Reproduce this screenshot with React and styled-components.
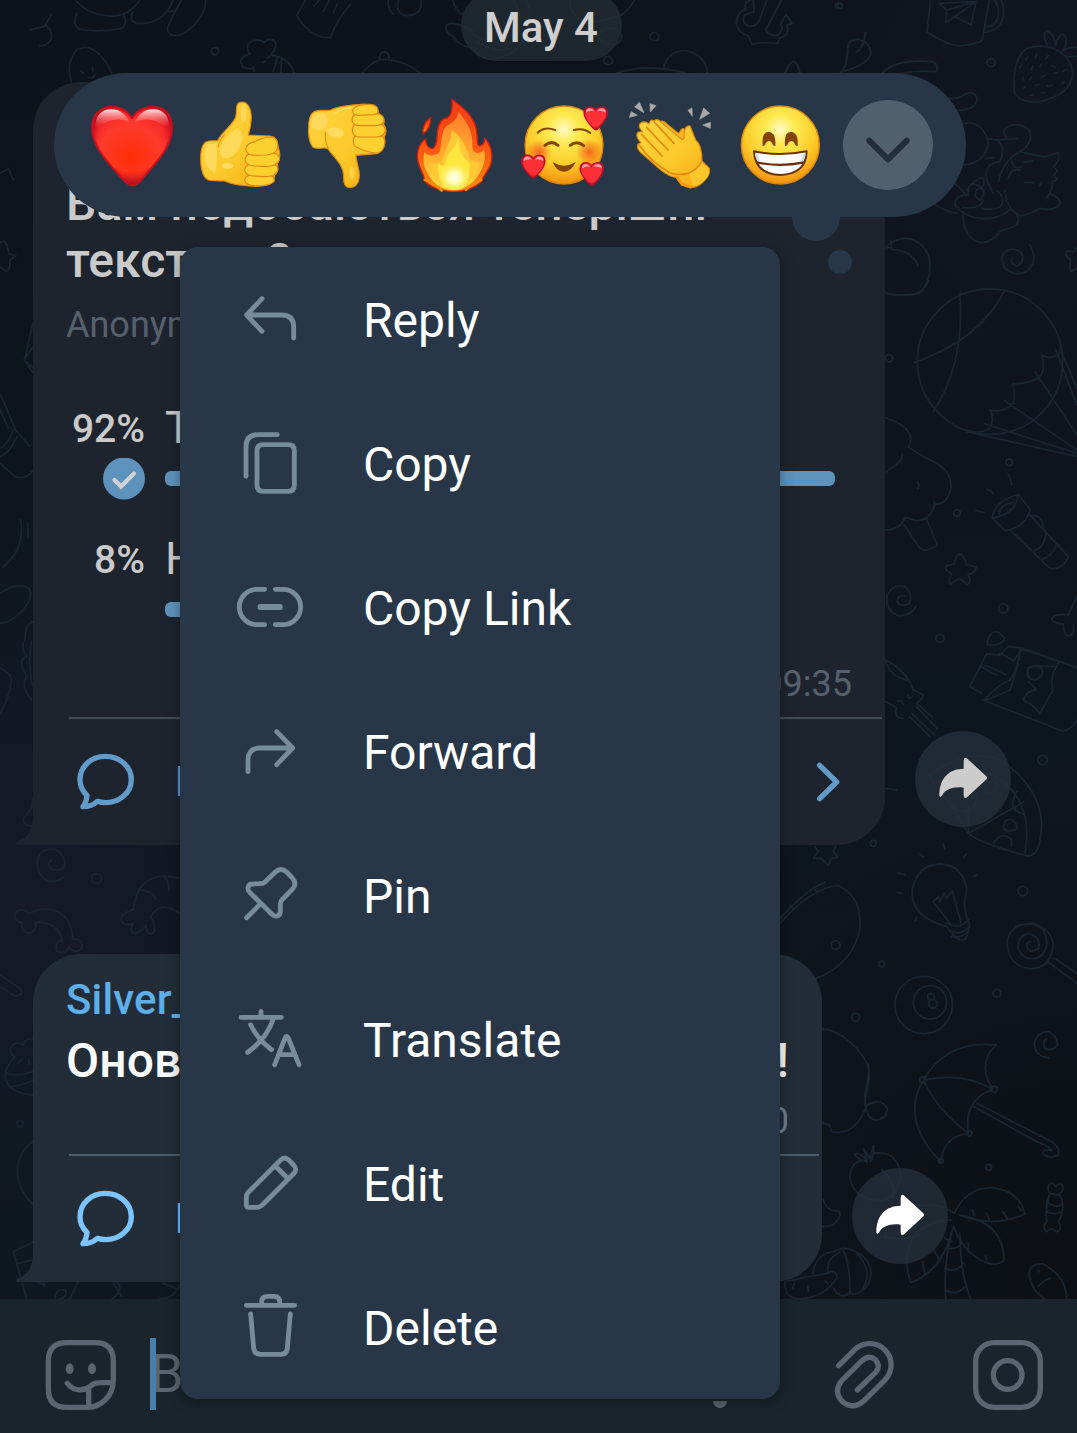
import React from "react";
import styled, { createGlobalStyle } from "styled-components";

const GlobalStyle = createGlobalStyle`
  * { box-sizing: border-box; }
  body { margin: 0; background: #0d131b; font-family: Roboto, "Noto Sans", sans-serif; }
  svg { display: block; flex: none; }
`;

const Screen = styled.div`
  position: relative;
  width: 1077px;
  height: 1433px;
  overflow: hidden;
  display: flex;
  flex-direction: column;
  background:
    radial-gradient(circle at 0% 62%, #141b27 0, rgba(20, 27, 39, 0) 420px),
    radial-gradient(circle at 100% 8%, #101520 0, rgba(16, 21, 32, 0) 620px),
    radial-gradient(circle at 100% 88%, #0c1015 0, rgba(12, 16, 21, 0) 520px),
    linear-gradient(180deg, #0c131a 0%, #0d151e 45%, #0f1820 100%);
`;

const Wallpaper = styled.svg`
  position: absolute;
  inset: 0;
  fill: none;
  stroke: #1a252f;
  stroke-width: 5.5;
  stroke-linecap: round;
  stroke-linejoin: round;
`;

const Chat = styled.main`
  position: relative;
  height: 1299px;
  display: flex;
  flex-direction: column;
  align-items: flex-start;
`;

const DatePill = styled.div`
  align-self: center;
  width: 161px;
  height: 71px;
  margin: -10px 0 21px 5px;
  padding-top: 4px;
  border-radius: 36px;
  display: flex;
  align-items: center;
  justify-content: center;
  flex: none;
  background: rgba(36, 45, 54, 0.75);
  color: #cfcfcf;
  font-size: 42px;
  font-weight: 500;
`;

const MessageRow = styled.div`
  display: flex;
  align-items: flex-end;
  gap: 30px;
  margin: 0 0 109px 33px;
  flex: none;
`;

const Bubble = styled.article`
  position: relative;
  width: ${(p) => p.$width}px;
  height: ${(p) => p.$height}px;
  padding-top: ${(p) => p.$top}px;
  border-radius: 48px 48px 48px 0;
  background: ${(p) => p.$bg};
  color: ${(p) => p.$fg};
  display: flex;
  flex-direction: column;
`;

const Tail = styled.svg`
  position: absolute;
  left: -17px;
  bottom: 0;
  fill: ${(p) => p.$bg};
`;

const Title = styled.h2`
  margin: ${(p) => p.$mt || 0}px 33px 0;
  font-size: 48px;
  font-weight: 500;
  line-height: 56.5px;
  letter-spacing: 0.08px;
  white-space: nowrap;
  text-align-last: ${(p) => (p.$spread ? "justify" : "left")};
`;

const Author = styled.div`
  margin-left: 33px;
  font-size: 42px;
  font-weight: 500;
  line-height: 49px;
  letter-spacing: 0.15px;
  color: #5eaee9;
`;

const PollKind = styled.div`
  margin: 15px 33px 23px;
  font-size: 36px;
  line-height: 42px;
  color: #57616c;
`;

const Option = styled.div`
  display: grid;
  grid-template-columns: 78px 1fr;
  grid-template-rows: 53px 42px;
  gap: 4px 21px;
  margin: 32px 49px 0 33px;
`;

const Percent = styled.span`
  align-self: end;
  justify-self: end;
  margin-right: -1px;
  font-size: 39px;
  font-weight: 500;
  line-height: 49px;
`;

const Answer = styled.span`
  font-size: 45px;
  line-height: 53px;
`;

const CheckSlot = styled.span`
  justify-self: end;
  margin-right: -1px;
`;

const Bar = styled.span`
  align-self: start;
  width: ${(p) => p.$value}px;
  height: 15px;
  margin-top: 13px;
  border-radius: 6px;
  background: #5d92bd;
`;

const Time = styled.time`
  align-self: flex-end;
  margin: ${(p) => p.$mt}px 33px 12px;
  font-size: 36px;
  line-height: 42px;
  color: ${(p) => p.$color};
`;

const CommentBar = styled.footer`
  display: flex;
  align-items: center;
  height: 128px;
  margin: 0 3px 0 36px;
  padding-right: 36px;
  border-top: 2px solid ${(p) => p.$line};
  color: ${(p) => p.$color};
  font-size: 42px;
  font-weight: 500;
`;

const CommentLabel = styled.span`
  flex: 1;
  padding-left: 34px;
  line-height: 49px;
  margin-top: -2px;
`;

const ShareButton = styled.button`
  width: 96px;
  height: 96px;
  margin: 0 0 18px;
  padding: 0;
  border: 0;
  border-radius: 50%;
  background: rgba(38, 48, 57, 0.8);
  color: ${(p) => p.$color};
`;

const Composer = styled.footer`
  position: relative;
  display: flex;
  align-items: center;
  height: 134px;
  padding: 18px 33px 0 45px;
  background: #1a242d;
  color: #5b6570;
  gap: 72px;
`;

const Field = styled.div`
  position: relative;
  flex: 1;
  margin-left: -39px;
  height: 72px;
  font-size: 54px;
  line-height: 70px;
`;

const Caret = styled.span`
  position: absolute;
  left: 0;
  top: -1px;
  width: 6px;
  height: 72px;
  background: #457fab;
`;

const ReactionBar = styled.div`
  position: absolute;
  left: 54px;
  top: 73px;
  width: 912px;
  height: 144px;
  padding: 0 33px 0 24px;
  border-radius: 72px;
  display: flex;
  align-items: center;
  background: #283747;
`;

const Dot = styled.span`
  position: absolute;
  left: ${(p) => p.$x}px;
  top: ${(p) => p.$y}px;
  width: ${(p) => p.$size}px;
  height: ${(p) => p.$size}px;
  border-radius: 50%;
  background: #283747;
`;

const Expand = styled.button`
  width: 90px;
  height: 90px;
  margin: 0 0 0 9px;
  padding: 0;
  border: 0;
  border-radius: 50%;
  background: #51606e;
`;

const Menu = styled.nav`
  position: absolute;
  left: 180px;
  top: 247px;
  width: 600px;
  border-radius: 18px;
  background: #283747;
  box-shadow: 0 3px 14px rgba(0, 0, 0, 0.35);
  color: #fff;
`;

const MenuItem = styled.div`
  display: flex;
  align-items: center;
  gap: 57px;
  height: 144px;
  padding: 0 54px;
  font-size: 48px;
`;

const MenuLabel = styled.span`
  padding-top: 2px;
`;

const MenuIcon = styled.svg`
  fill: none;
  stroke: #778b9a;
  stroke-width: 14.5;
  stroke-linecap: round;
  stroke-linejoin: round;
`;

const LineIcon = styled.svg`
  fill: none;
  stroke: currentColor;
  stroke-width: 16;
  stroke-linecap: round;
  stroke-linejoin: round;
`;

const menu = [
  ["Reply", "702 309 216 216", "M786 356L740 405L786 454M740 405H845Q881 405 881 441V474"],
  ["Copy", "702 741 216 216", "M789 794H865Q883 794 883 812V916Q883 934 865 934H789Q771 934 771 916V812Q771 794 789 794ZM738 889V800Q738 764 774 764H832"],
  ["Copy Link", "702 1173 216 216", "M794 1228H771a53 53 0 0 0 0 106H794M826 1228H849a53 53 0 0 1 0 106H826M780 1279H841M780 1283H841"],
  ["Forward", "702 225 216 216", "M744 395V360Q744 324 780 324H877M830 275L878 324L830 374"],
  ["Pin", "702 657 216 216", "M740 833L780 793M749 757C740 748 743 732 757 732L782 731Q790 731 795 726L826 696Q843 681 860 696L876 713Q893 731 877 748L848 777Q841 784 841 792V815C841 829 825 832 816 823Z"],
  ["Translate", "42 69 216 216", "M63 112H184M123 94V108M92 134Q112 178 155 209M160 116Q140 176 83 217M164 254L194 177Q200 162 206 177L237 254M176 224H225"],
  ["Edit", "42 501 216 216", "M79 652Q79 643 85 637L181 541Q194 528 207 541L220 554Q234 569 220 582L130 672Q121 682 110 682H86Q79 682 79 675ZM168 560L199 591"],
  ["Delete", "42 933 216 216", "M79 976H224M125 972V966Q125 949 142 949H162Q179 949 179 966V972M92 1002L101 1104Q103 1123 122 1123H182Q201 1123 202 1104L211 1002"],
];

/* Each sheet is a group of doodles drawn at three times their size. */
const sheets = [
  {
    at: "translate(40 0) scale(.3333)",
    d: "M105 0Q150 50 220 48Q270 45 300 0M110 40Q95 75 120 88Q180 98 245 85Q265 70 250 42M278 38Q265 62 290 70Q350 75 385 30L400 0M385 35L402 33M425 0Q395 50 382 85Q385 110 415 107Q450 95 475 60Q498 30 497 0M95 250Q75 190 110 150Q140 130 175 160Q205 190 215 220M123 213l8 7M157 203l2 10M145 232Q158 240 165 222M-30 90L15 78L35 42M20 78Q40 95 32 120Q20 138 0 138M640 205Q605 210 602 185Q605 165 630 163Q610 135 640 122Q660 117 672 127Q690 110 705 125Q712 145 695 160M695 165Q750 175 762 218M712 170L700 215M725 175L722 218M640 200L642 214M668 188l8 -5M682 174l8 -6M795 0Q785 25 770 45Q800 100 850 112L872 112Q890 60 930 15M838 0L822 18M868 0L850 35M893 10L880 38M1045 0Q1040 25 1060 42M1075 0Q1065 40 1100 47Q1150 45 1143 0M967 218Q1000 180 1030 178Q1090 180 1140 218M1020 180Q1015 158 1033 156Q1052 160 1045 178M1238 0Q1245 30 1270 45M1300 95Q1240 60 1220 75Q1212 95 1240 110Q1260 140 1300 145Q1310 170 1350 178Q1440 170 1465 90Q1475 40 1460 0M1300 105Q1380 150 1430 120M1310 125Q1370 160 1410 145M1420 0Q1455 60 1430 110",
    c: [[525, 154, 11]],
  },
  {
    at: "translate(500 0) scale(.368 .3333)",
    d: "M680 0Q660 10 668 25Q640 40 643 75Q650 100 675 108L685 133L715 128L755 130L760 115Q790 105 780 75L793 70L777 43L763 72Q772 90 755 105Q735 110 722 90L765 0M725 0L705 60Q695 82 675 78Q655 70 665 45L690 35L688 0M925 217Q945 200 945 140Q950 115 975 118Q1005 125 1008 160Q1000 195 925 217M993 97Q990 140 968 158M1040 217Q1080 175 1175 185Q1195 195 1185 215Q1130 210 1090 222M320 218Q400 190 500 218M445 200Q460 150 505 152Q560 165 563 218M775 218Q790 180 800 185Q810 195 815 218M190 0Q185 40 230 65Q270 70 330 45Q355 25 365 0M265 110Q275 80 310 85Q345 105 320 130Q285 140 265 110",
    c: [[920, 17, 9], [420, 110, 12], [294, 182, 12]],
  },
  {
    at: "translate(840 0) scale(.3333)",
    d: "M272 0L261 95Q320 137 365 137Q410 132 427 122L447 0M433 97Q490 90 491 35Q490 10 483 0M437 80Q475 80 475 35Q473 10 462 0M408 5L297 10L320 30L318 68L345 50L393 75L408 5L320 30M408 5L318 68M560 145Q610 130 650 150Q700 180 698 225Q690 285 600 305Q535 310 523 275Q515 180 560 145M625 142Q605 105 620 92Q640 100 648 135Q655 100 672 103Q690 130 660 160M665 155Q680 140 711 142M670 165Q690 175 711 168M563 170l-5 10M590 163l-4 10M625 167l-7 8M545 193l-5 10M578 198l-3 12M605 192l-5 8M635 197l10 4M550 232l-3 8M575 232l-6 8M605 230l12 -4M640 220l10 -2M670 214l7 -4M555 260l-5 7M587 256l10 -3M622 258l15 -2M665 250l8 -4M570 287l10 -3M605 278l10 -1M320 295Q355 300 375 282Q400 270 412 295Q410 330 350 332M370 370Q430 360 445 430Q435 490 370 495M445 415L468 420L535 416M440 475L462 473M540 455Q580 430 570 395Q555 370 515 375Q475 390 500 412M470 420Q500 440 480 485Q430 490 440 540L460 580M475 545Q490 480 540 455Q600 470 615 470L655 458Q660 485 640 500L652 512L642 525L652 540L637 545Q640 570 620 592M515 485Q520 510 545 500M505 535Q510 505 540 510M548 485Q560 488 578 483M555 547L580 548M605 547L598 558M495 570Q500 630 540 647Q570 645 600 625Q650 635 662 608Q655 590 630 582M345 550L380 585Q340 590 345 615Q380 660 450 655Q490 650 510 627M280 612Q320 635 350 640M370 645Q370 720 425 728Q460 725 480 695L520 680Q545 665 530 645M368 622Q420 630 430 600M425 626Q490 635 488 600Q485 580 470 572M380 570Q410 530 430 535Q440 560 410 570Q400 590 420 600Q450 570 400 550Q380 560 385 585M135 745Q165 710 210 716Q270 735 270 800Q270 850 240 880Q190 890 135 880M135 740L155 745L152 722M155 748Q215 750 234 797M570 735Q595 780 565 810Q530 835 495 805Q475 770 500 752Q530 740 548 765Q550 795 528 798Q508 790 517 772M711 740L702 755L680 753Q672 765 692 780Q685 820 698 812L711 805",
    c: [[453, 188, 12], [0, 18, 7]],
  },
  {
    at: "translate(740 280) scale(.3333)",
    d: "M435 35Q455 48 500 45Q550 45 565 0M660 38Q675 250 580 395M795 30Q720 180 522 248M680 450Q720 465 750 445Q765 420 750 390Q790 400 820 370Q825 340 818 310Q870 315 905 285Q915 250 905 225Q930 240 955 225L965 205M680 455L1011 530M735 432L1011 520M795 363L1011 510M885 275L1011 465M948 210L1011 375M960 205L1011 325M435 412Q515 440 512 480L505 502Q540 525 580 545Q640 575 632 630Q620 675 583 672Q575 720 530 722L495 712Q480 750 435 750M435 577Q490 545 487 522M583 665V680M532 605Q540 615 534 625M493 735L540 805Q555 820 592 795L560 718M805 582L815 613M740 627Q755 632 757 640M708 692L732 698M757 715Q760 665 835 643L870 688Q860 740 797 753ZM757 715Q830 700 835 643M778 705Q775 675 820 668M810 750L930 865Q970 870 985 830L870 705M870 708Q905 700 910 740M918 760Q915 800 882 813M948 795Q940 825 907 838M660 822Q672 825 680 855L708 860Q710 875 685 885Q695 910 682 912L658 895L632 912Q622 905 635 882Q610 868 618 858L642 853Q648 825 660 822M529 978Q510 1010 475 1007Q435 995 442 945Q460 910 495 920Q520 940 508 970Q485 985 472 965Q470 945 493 948M1011 950L985 1005Q940 1000 935 1018Q940 1030 970 1032Q970 1065 985 1068Q1005 1065 1000 1035M742 1085Q750 1050 775 1057L795 1075Q785 1100 742 1095ZM700 1200L740 1122L780 1125L805 1100L850 1105L1011 1163M780 1120L820 1142L850 1105M735 1155L800 1185M435 1140Q480 1160 505 1200M870 1195Q850 1160 885 1158L950 1160",
    c: [[750, 245, 218], [447, 235, 11], [808, 547, 10], [651, 699, 10], [790, 985, 14], [600, 1075, 12]],
  },
  {
    at: "translate(740 640) scale(.3333)",
    d: "M740 42L690 140L725 160M735 178Q780 130 810 120Q840 70 840 25L1011 82M727 180L965 272Q990 275 1011 240M770 105L720 78M835 70L810 150L740 180M865 85Q850 115 885 120Q915 110 905 85Q890 70 865 85M955 70Q925 120 940 150L898 222Q890 200 850 180Q860 150 890 150L865 125M435 60Q500 90 520 150L550 165Q545 180 530 190L578 232M530 200L592 267M515 220L585 285M508 230L570 290M490 235Q460 235 470 205Q450 190 435 185M435 60Q450 110 500 120M475 185Q485 175 490 195M503 165Q505 180 517 170M435 445L470 450M568 405Q720 300 815 385Q925 480 900 600Q890 660 850 645Q720 610 685 580L595 440Q570 425 568 405M590 425Q700 360 790 425Q880 500 855 640M685 580L850 487M685 580V500M830 455Q800 510 850 522M760 610Q785 570 815 600L815 620M740 430Q765 415 775 435Q770 460 740 460Q730 445 740 430M795 545Q810 530 822 545Q840 560 825 570Q795 580 790 560ZM225 620L235 635L220 655L243 655L265 677L275 655L293 652L280 635L288 618M610 612L615 627M540 642L550 650M680 642L670 653M472 698L495 704M710 705L700 710M472 758L487 760M530 832L526 843M620 860Q510 830 517 750Q530 675 600 672Q670 675 680 750Q665 800 688 850Q690 870 675 900Q650 905 620 860M620 850Q660 870 685 840M625 870Q660 890 688 860M635 890Q665 895 685 875M630 850L580 785L595 770L600 785L612 758L620 775L637 752L663 848M120 850Q220 740 295 737Q365 770 360 860Q345 970 225 1017M120 835Q210 740 255 727M150 795L160 805M220 740L230 755M800 915Q805 850 880 850Q940 870 940 920Q930 985 870 987Q805 975 802 915M825 860Q880 840 910 870Q935 920 900 950Q860 970 835 930Q830 885 870 880Q905 895 895 925Q870 945 860 920Q860 905 872 905M943 955L1011 1000M925 967L1011 1030M925 1253Q885 1250 883 1210Q890 1175 925 1175Q955 1190 952 1215Q940 1235 915 1225Q905 1205 920 1197M245 1168Q290 1165 350 1225Q400 1280 385 1330L375 1380",
    c: [[670, 475, 40], [400, 610, 9], [908, 360, 14], [849, 753, 14], [287, 915, 13], [425, 972, 9], [551, 1095, 86], [570, 1087, 50], [573, 1070, 10], [579, 1091, 13], [771, 1060, 12], [347, 1132, 12]],
  },
  {
    at: "translate(750 960) scale(.3333)",
    d: "M355 310Q360 340 346 400Q340 470 375 480Q410 480 412 445Q390 410 350 437Q315 530 245 515L240 497L215 487M520 360Q590 240 738 255Q680 310 728 388Q640 420 655 520Q580 530 572 605Q450 480 520 360Q640 335 728 388M520 360Q560 450 655 520M682 430L900 543Q930 555 925 585Q900 600 880 582Q875 565 905 572Q900 560 860 545L672 440M352 605Q320 600 313 580Q335 580 352 600L342 567L360 595L370 557Q375 585 360 605M350 600Q300 600 300 655Q310 715 385 722Q440 720 452 650Q445 570 372 580M395 628Q435 665 430 710M220 720Q230 755 265 752Q280 765 250 795Q235 800 218 800M613 760Q650 680 730 683Q810 695 825 762Q730 805 628 765M668 750L672 767M710 760L718 778M758 755L772 775M805 740L815 752M628 765Q760 785 763 900Q740 925 690 900Q630 860 612 800M655 850L655 875M708 888L710 908M613 760Q560 720 480 745Q420 770 405 830Q450 845 510 825M605 780Q540 780 500 820Q450 880 483 968Q580 930 610 800M518 905L525 945M550 868L570 903M585 835L605 845M610 800Q580 900 587 1017M630 820Q630 940 662 1017M595 865Q620 870 635 850M585 925Q620 940 640 910M587 990Q620 1010 648 978M897 675Q905 660 917 680Q930 665 940 680Q940 695 928 700Q950 740 925 785Q940 810 920 815Q905 800 890 815Q875 800 890 785Q885 740 900 700Q890 690 897 675M900 700L925 705M890 725Q915 745 935 735M890 755Q910 765 930 758M950 1017Q950 950 880 912Q835 910 838 950Q850 1000 885 1017M865 980Q880 960 900 955M105 965Q100 1015 150 1017Q230 1010 262 950Q255 925 230 940Q170 950 105 965M135 963L128 985M173 978L176 995M225 963L233 970M188 940Q200 880 250 875Q290 850 340 890Q380 930 350 980Q320 1010 300 1000M270 875Q225 900 235 940M278 870Q300 900 300 1000Q270 1020 250 985M320 880Q370 930 340 985",
    c: [[518, 360, 9], [733, 388, 9], [658, 520, 8], [572, 602, 7], [716, 622, 9], [866, 933, 2]],
  },
  {
    at: "translate(0 180) scale(.3333)",
    d: "M0 190Q10 175 20 195L28 222L48 228L30 240Q30 275 18 275L0 260M0 -20L25 -35L40 0M100 425L73 540L100 580M75 535L100 500M80 545L100 565M0 640L47 750L90 800M0 690L25 745M40 750Q20 800 0 805M50 770Q30 820 0 830M0 850L45 890Q80 900 100 870M62 1020Q75 1110 10 1160M83 1030L85 1075M0 1240Q60 1200 90 1230Q100 1270 40 1315Q20 1330 0 1330M100 1325Q75 1330 75 1380M75 1380Q60 1400 80 1430Q50 1440 80 1490Q60 1520 95 1560M0 1465Q40 1480 33 1510Q25 1560 0 1600M95 1385Q80 1440 98 1520",
    c: [],
  },
  {
    at: "translate(0 640) scale(.3333)",
    d: "M98 475L95 505Q70 530 70 540Q75 560 98 558M190 712Q160 735 130 715Q105 690 115 650Q135 620 170 630Q200 650 193 680Q175 700 152 685Q140 670 155 660M88 822Q70 800 48 815Q35 840 65 848Q65 885 95 878Q115 860 103 848Q170 840 187 900Q160 910 172 935Q195 945 207 922Q225 945 245 925Q250 895 218 898Q215 820 150 808Q110 805 88 822M400 808Q410 715 490 707L540 715M488 707Q508 720 506 750M425 750Q460 755 468 777M400 808Q355 825 365 845Q375 860 400 850Q385 875 405 882Q430 870 438 855Q440 885 455 882Q475 870 452 830Q480 780 540 820",
    c: [[290, 716, 15]],
  },
  {
    at: "translate(0 940) scale(.3333)",
    d: "M0 105L60 145Q75 165 45 168L0 140M100 300Q75 290 70 315Q45 300 32 325Q30 345 45 350Q15 380 15 410Q25 460 100 465M20 400Q50 410 100 395M25 440Q60 440 100 420M65 358L55 370M85 360L88 372M100 603Q50 640 52 700Q60 760 100 793M100 905L40 935L80 1077M50 972L100 960M65 1025Q100 1010 135 1040L130 1025M165 1077Q165 1045 195 1050Q205 1070 180 1077M235 1025L210 1077M350 1025Q375 1050 335 1077M340 1030L365 1070M490 1030L540 1050M540 1035Q520 1080 480 1075",
    c: [[60, 551, 10]],
  },
];

const Backdrop = () => (
  <Wallpaper width="1077" height="1433" viewBox="0 0 1077 1433">
    {sheets.map((s) => (
      <g key={s.at} transform={s.at}>
        <path d={s.d} />
        {s.c.map(([x, y, r]) => (
          <circle key={`${x}-${y}`} cx={x} cy={y} r={r} />
        ))}
      </g>
    ))}
  </Wallpaper>
);

const Slot = ({ box, children }) => (
  <svg width="108" height="144" viewBox={box}>{children}</svg>
);

const heartShape =
  "M277 556C264 556 252 543 237 525C207 490 156 440 156 384C156 347 179 320 213 320C240 320 262 332 276 354C290 332 312 320 340 320C376 320 396 347 396 384C396 440 346 490 316 525C300 546 290 556 277 556Z";

const Defs = () => (
  <defs>
    <radialGradient id="heart" gradientUnits="userSpaceOnUse" cx="272" cy="470" r="170">
      <stop offset="0" stopColor="#ff2d05" />
      <stop offset=".55" stopColor="#ff3a2c" />
      <stop offset=".85" stopColor="#f3222a" />
      <stop offset="1" stopColor="#e6141f" />
    </radialGradient>
    <radialGradient id="heartLow" cx=".5" cy=".42" r=".6">
      <stop offset=".68" stopColor="#a80018" stopOpacity="0" />
      <stop offset="1" stopColor="#a80018" />
    </radialGradient>
    <linearGradient id="gloss" x1="0" y1="0" x2="0" y2="1">
      <stop offset="0" stopColor="#ffe3e6" />
      <stop offset="1" stopColor="#ff5a55" stopOpacity="0" />
    </linearGradient>
    <linearGradient id="hand" x1="0" y1="0" x2="1" y2="1">
      <stop offset="0" stopColor="#ffd340" />
      <stop offset=".55" stopColor="#fbc92a" />
      <stop offset="1" stopColor="#f6a313" />
    </linearGradient>
    <radialGradient id="face" cx=".5" cy=".3" r=".75">
      <stop offset="0" stopColor="#fff9c4" />
      <stop offset=".25" stopColor="#fdea50" />
      <stop offset=".6" stopColor="#fbcd29" />
      <stop offset=".85" stopColor="#f6a014" />
      <stop offset="1" stopColor="#ef7e0b" />
    </radialGradient>
    <linearGradient id="flame" x1="0" y1="0" x2="0" y2="1">
      <stop offset="0" stopColor="#f23a12" />
      <stop offset=".6" stopColor="#fb5c12" />
      <stop offset="1" stopColor="#f98b10" />
    </linearGradient>
    <linearGradient id="flameMid" x1="0" y1="0" x2="0" y2="1">
      <stop offset="0" stopColor="#ff7d2c" />
      <stop offset=".6" stopColor="#fdb02f" />
      <stop offset="1" stopColor="#ffe23c" />
    </linearGradient>
    <radialGradient id="glow">
      <stop offset="0" stopColor="#fffff0" />
      <stop offset=".4" stopColor="#fffbb0" />
      <stop offset="1" stopColor="#ffe844" stopOpacity="0" />
    </radialGradient>
    <radialGradient id="blush">
      <stop offset="0" stopColor="#f4561a" stopOpacity=".85" />
      <stop offset="1" stopColor="#f4561a" stopOpacity="0" />
    </radialGradient>
  </defs>
);

const Heart = () => (
  <Slot box="114 219 324 432">
    <Defs />
    <path d={heartShape} fill="url(#heart)" />
    <path d={heartShape} fill="url(#heartLow)" stroke="#c9101c" strokeWidth="6" />
    <path d="M167 385C164 350 182 328 213 328C240 328 256 342 270 368Q225 342 167 385Z" fill="url(#gloss)" />
    <path d="M386 385C390 350 371 328 340 328C313 328 297 342 283 368Q328 342 386 385Z" fill="url(#gloss)" />
  </Slot>
);

const ThumbUp = () => (
  <Slot box="438 219 324 432">
    <g stroke="#dd8a12" strokeWidth="3.5" strokeLinejoin="round">
      <path fill="url(#hand)" d="M606 306C625 306 635 330 634 355C633 380 628 395 625 405L690 408C708 410 714 425 714 440C722 460 720 480 712 492C716 505 712 520 704 525C704 545 690 556 672 557L650 559C610 558 580 555 553 543C530 543 515 542 505 540C488 532 482 505 482 475C482 440 492 424 508 423L533 422C545 395 575 380 587 352C592 335 583 306 606 306Z" />
      <path fill="#fcd02f" d="M632 525H690Q706 532 702 545Q690 557 650 558Q618 556 614 541Q615 528 632 525Z" />
      <path fill="#fcd02f" d="M632 492H695Q714 495 714 510Q708 528 680 530L638 528Q615 525 614 510Q616 495 632 492Z" />
      <path fill="#fcd02f" d="M635 459H700Q720 463 718 480Q710 498 680 500L640 498Q616 495 615 478Q618 462 635 459Z" />
      <path fill="#fcd02f" d="M645 425Q670 410 700 412Q716 422 713 445Q706 463 680 465L640 466Q618 462 617 447Q620 430 645 425Z" />
    </g>
    <path d="M535 440Q538 420 553 405" fill="none" stroke="#e8990f" strokeWidth="4" strokeLinecap="round" />
    <path d="M503 432L528 430Q536 470 525 520Q500 505 494 480Q492 445 503 432Z" fill="#ffd95e" />
    <path d="M592 385Q612 395 607 420Q590 475 555 475Q535 470 540 445Q550 410 592 385Z" fill="#ffd95a" />
    <ellipse cx="562" cy="498" rx="17" ry="9" fill="#ffdc60" />
    <ellipse cx="611" cy="340" rx="9" ry="26" fill="#ffd95a" />
  </Slot>
);

const ThumbDown = () => (
  <Slot box="762 219 324 432">
    <g stroke="#dd8a12" strokeWidth="3.5" strokeLinejoin="round">
      <path fill="url(#hand)" d="M842 331C855 331 862 332 872 330C890 320 930 315 960 313C990 310 1015 318 1017 342C1032 350 1035 362 1031 373C1040 385 1040 400 1033 410C1038 430 1032 455 1010 461L948 466C948 490 960 505 958 530C956 552 945 563 932 563C915 563 910 550 911 530C912 500 890 480 870 455C865 445 860 443 850 444C835 446 825 446 818 441C806 425 804 400 806 375C808 345 815 332 842 331Z" />
      <path fill="#fcd02f" d="M958 403H1020Q1036 412 1034 432Q1030 455 1010 460Q975 455 950 442Q938 435 940 418Q944 405 958 403Z" />
      <path fill="#fcd02f" d="M952 370H1018Q1037 376 1036 393Q1032 410 1010 411H955Q937 408 937 390Q938 374 952 370Z" />
      <path fill="#fcd02f" d="M952 341H1012Q1032 345 1032 362Q1028 376 1005 377H955Q937 375 936 358Q938 344 952 341Z" />
      <path fill="#fcd02f" d="M965 315Q1005 308 1013 325Q1018 342 1000 344L955 346Q937 344 938 330Q945 317 965 315Z" />
    </g>
    <path d="M856 398Q854 425 865 445" fill="none" stroke="#e8990f" strokeWidth="4" strokeLinecap="round" />
    <path d="M825 342Q845 338 858 345Q868 365 855 387Q835 392 815 385Q812 355 825 342Z" fill="#ffd95e" />
    <ellipse cx="886" cy="397" rx="26" ry="15" transform="rotate(10 886 397)" fill="#ffdc60" />
    <ellipse cx="936" cy="520" rx="8" ry="20" fill="#ffd040" />
    <path d="M880 342Q905 325 932 325" fill="none" stroke="#ffd95a" strokeWidth="6" />
  </Slot>
);

const Fire = () => (
  <Slot box="1086 219 324 432">
    <path fill="url(#flame)" stroke="#c9200f" strokeWidth="4" d="M1236 298C1260 315 1310 350 1311 405C1313 425 1310 435 1318 438C1330 435 1335 425 1334 415C1345 425 1360 450 1354 485C1350 510 1325 530 1325 545C1300 568 1265 574 1241 574C1210 574 1170 565 1152 540C1158 530 1130 500 1132 465C1133 440 1145 425 1157 417C1157 435 1165 445 1178 446C1190 440 1190 420 1192 400C1195 370 1205 355 1222 354C1235 345 1238 320 1236 298Z" />
    <path fill="url(#flame)" stroke="#c9200f" strokeWidth="4" d="M1172 353C1172 375 1165 390 1150 401C1145 385 1155 365 1172 353Z" />
    <path fill="url(#flameMid)" d="M1255 335C1285 370 1300 400 1297 440C1297 460 1318 465 1332 450C1342 480 1325 515 1300 545Q1270 570 1241 570Q1205 570 1180 545C1155 515 1145 490 1153 457C1165 470 1185 468 1197 458C1208 435 1200 410 1215 382C1230 370 1252 365 1255 335Z" />
    <path fill="#ffc935" d="M1235 390C1265 410 1280 440 1290 480L1318 490Q1310 530 1280 555Q1240 575 1200 555Q1175 530 1170 490L1205 495C1210 450 1235 430 1235 390Z" />
    <path fill="#ffe63f" d="M1254 418C1258 445 1265 475 1287 485Q1295 530 1275 560Q1240 578 1208 558Q1190 520 1195 485Q1205 505 1215 492C1220 455 1245 450 1254 418Z" />
    <ellipse cx="1243" cy="532" rx="50" ry="46" fill="url(#glow)" />
    <path d="M1154 540Q1180 548 1205 572M1324 540Q1295 550 1278 570" fill="none" stroke="#f98b10" strokeWidth="7" strokeLinecap="round" />
  </Slot>
);

const MiniHeart = ({ x, y }) => (
  <g transform={`translate(${x} ${y}) scale(.29) translate(-276 -438)`}>
    <path d={heartShape} fill="#fb3036" stroke="#c01028" strokeWidth="14" />
    <path d={heartShape} fill="url(#heartLow)" />
    <path d="M175 380C172 350 190 334 213 334Q240 334 262 366Q225 350 175 380Z" fill="#ff9ca4" />
    <path d="M380 380C384 350 365 334 340 334Q313 334 292 366Q328 350 380 380Z" fill="#ff9ca4" />
  </g>
);

const LovingFace = () => (
  <Slot box="30 -51 324 432">
    <circle cx="192" cy="165" r="117" fill="url(#face)" stroke="#dc8511" strokeWidth="4" />
    <circle cx="117" cy="186" r="38" fill="url(#blush)" />
    <circle cx="268" cy="186" r="40" fill="url(#blush)" />
    <g fill="none" stroke="#854408" strokeLinecap="round">
      <path strokeWidth="6" d="M113 128Q135 108 165 120M221 120Q250 112 271 129" />
      <path strokeWidth="9" d="M135 166Q155 150 174 166M211 166Q231 150 251 167" />
    </g>
    <path d="M158 216Q192 238 227 216Q215 245 192 245Q168 244 158 216Z" fill="#854408" />
    <MiniHeart x={287} y={85} />
    <MiniHeart x={100} y={230} />
    <MiniHeart x={275} y={252} />
  </Slot>
);

const Clap = () => (
  <Slot box="354 -51 324 432">
    <path fill="#a9a9a9" d="M418 37L404 51L432 68ZM450 41L468 47L451 66ZM394 65L388 82L412 76ZM564 61L576 54L577 79ZM611 54L629 70L599 88ZM608 105L631 97L631 115Z" stroke="#a9a9a9" strokeWidth="2" strokeLinejoin="round" />
    <g stroke="#dc8a12" strokeWidth="3.5" strokeLinejoin="round">
      <path fill="#f9b71c" d="M540 125Q545 112 553 118L570 170L500 130L478 96Q490 88 502 103L535 130Z" />
      <path fill="url(#hand)" d="M462 93Q472 83 483 97L545 148Q555 150 552 130Q555 105 570 108L587 150Q606 165 606 213L628 235Q633 255 605 280Q590 293 572 292Q545 290 528 262C510 262 495 250 480 238L425 190Q408 175 414 162L423 158Q405 140 413 127L428 125Q410 108 423 98Q435 92 448 102Q450 85 462 93Z" />
    </g>
    <path fill="#fdc62b" d="M604 218Q590 240 567 250L580 288Q600 288 622 262Q632 245 624 232Z" />
    <path d="M462 95L522 160M440 112L504 180M425 133L486 198M418 165Q450 215 510 248Q530 258 565 250Q590 240 605 215" fill="none" stroke="#df8c10" strokeWidth="5" strokeLinecap="round" />
    <path d="M532 262L546 283L572 291" fill="none" stroke="#f39a10" strokeWidth="9" strokeLinecap="round" />
  </Slot>
);

const Grin = () => (
  <Slot box="678 -51 324 432">
    <circle cx="841" cy="165" r="117" fill="url(#face)" stroke="#dc8511" strokeWidth="4" />
    <path fill="#854408" d="M788 167Q784 125 806 125Q829 127 826 167Q820 172 816 158Q808 148 798 158Q794 172 788 167ZM855 167Q851 125 873 125Q896 127 893 167Q887 172 883 158Q875 148 865 158Q861 172 855 167Z" />
    <path d="M762 184Q841 200 920 184Q918 253 841 255Q765 252 762 184Z" fill="#fff" stroke="#6a3206" strokeWidth="6" strokeLinejoin="round" />
    <path d="M768 192Q772 210 778 213M914 192Q910 208 904 213" stroke="#bcdfe2" strokeWidth="7" fill="none" />
    <path d="M770 217Q841 232 912 217" stroke="#6a3206" strokeWidth="7" fill="none" />
  </Slot>
);

const Share = ({ color }) => (
  <ShareButton $color={color} aria-label="Share">
    <svg width="96" height="96" viewBox="525 273 288 288">
      <path fill="currentColor" d="M671 362Q672 349 682 356L738 408Q744 414 738 419L681 472Q672 477 671 467V443C640 439 615 448 606 467Q597 475 598 462C600 415 625 387 671 386Z" />
    </svg>
  </ShareButton>
);

const Comments = ({ color, line, arrow }) => (
  <CommentBar $color={color} $line={line}>
    <LineIcon width="72" height="72" viewBox="207 320 216 216">
      <path d="M316 351C358 351 394 381 394 421C394 460 358 490 318 490C308 490 300 489 292 486Q275 502 249 502Q259 490 261 468C247 455 240 440 240 421C240 381 274 351 316 351Z" />
    </LineIcon>
    <CommentLabel>Leave a comment</CommentLabel>
    {arrow && (
      <LineIcon width="36" height="72" viewBox="212 318 108 216">
        <path d="M241 376L292 426L241 476" />
      </LineIcon>
    )}
  </CommentBar>
);

const BubbleTail = ({ bg }) => (
  <Tail $bg={bg} width="18" height="30" viewBox="48 525 54 90">
    <path d="M102 525H99C99 570 85 594 51 605Q46 608 51 615H102Z" />
  </Tail>
);

export default function App() {
  return (
    <Screen>
      <GlobalStyle />
      <Backdrop />
      <Chat>
        <DatePill>May 4</DatePill>
        <MessageRow>
          <Bubble $width={852} $height={763} $top={94} $bg="#1e242e" $fg="#cacaca">
            <BubbleTail bg="#1e242e" />
            <Title>
              Вам подобаються теперішні
              <br />
              текстури?
            </Title>
            <PollKind>Anonymous Poll</PollKind>
            <Option>
              <Percent>92%</Percent>
              <Answer>Так</Answer>
              <CheckSlot>
                <svg width="42" height="42" viewBox="0 0 42 42">
                  <circle cx="21" cy="20.5" r="21" fill="#5d92bd" />
                  <path d="M11.5 22L18 28.5L31 15.5" fill="none" stroke="#d2d2d2" strokeWidth="4.2" strokeLinecap="round" strokeLinejoin="miter" />
                </svg>
              </CheckSlot>
              <Bar $value={670} />
            </Option>
            <Option>
              <Percent>8%</Percent>
              <Answer>Ні</Answer>
              <CheckSlot />
              <Bar $value={58} />
            </Option>
            <Time $mt={32} $color="#57616c">09:35</Time>
            <Comments color="#629bca" line="#434d57" arrow />
          </Bubble>
          <Share color="#cccccc" />
        </MessageRow>
        <MessageRow>
          <Bubble $width={789} $height={328} $top={21} $bg="#222d38" $fg="#fafafa">
            <BubbleTail bg="#222d38" />
            <Author>Silver_Craft</Author>
            <Title $mt={8.5} $spread>Оновлення вже доступне !</Title>
            <Time $mt={11} $color="#6d7d8c">10:00</Time>
            <Comments color="#7cc4ff" line="#4c5c6b" />
          </Bubble>
          <Share color="#ffffff" />
        </MessageRow>
      </Chat>
      <Composer>
        <LineIcon width="72" height="72" viewBox="135 1197 216 216">
          <path d="M340 1320V1263Q340 1208 285 1208H200Q145 1208 145 1263V1347Q145 1402 200 1402H262C305 1402 340 1366 340 1320M202 1330C225 1358 255 1352 272 1338C285 1325 300 1328 335 1328M266 1345V1395" />
          <ellipse cx="209" cy="1286" rx="12" ry="16" fill="currentColor" stroke="none" />
          <ellipse cx="276" cy="1286" rx="12" ry="16" fill="currentColor" stroke="none" />
        </LineIcon>
        <Field>
          Broadcast
          <Caret />
        </Field>
        <LineIcon width="72" height="72" viewBox="12 717 216 216">
          <path d="M60 870H180L165 845V800a45 45 0 0 0-90 0V845Z" />
          <path d="M99 903H141a21 21 0 0 1-42 0Z" fill="currentColor" stroke="none" />
        </LineIcon>
        <LineIcon width="72" height="72" viewBox="444 717 216 216">
          <path d="M476 797L524 749C549 725 590 725 614 749C640 775 640 813 614 841L550 904Q518 931 486 904Q459 874 486 841L546 782Q568 763 587 780Q603 799 587 817L532 870" />
        </LineIcon>
        <LineIcon width="72" height="72" viewBox="876 717 216 216">
          <rect x="887" y="728" width="194" height="194" rx="55" />
          <circle cx="983" cy="825" r="43" />
        </LineIcon>
      </Composer>
      <ReactionBar>
        <Heart />
        <ThumbUp />
        <ThumbDown />
        <Fire />
        <LovingFace />
        <Clap />
        <Grin />
        <Expand aria-label="More reactions">
          <svg width="90" height="90" viewBox="9 300 270 270">
            <path d="M88 422L144 478L200 422" fill="none" stroke="#222e3b" strokeWidth="18" strokeLinecap="round" strokeLinejoin="round" />
          </svg>
        </Expand>
        <Dot $x={738} $y={120} $size={48} />
        <Dot $x={774} $y={177} $size={24} />
      </ReactionBar>
      <Menu>
        {menu.map(([label, box, d]) => (
          <MenuItem key={label}>
            <MenuIcon width="72" height="72" viewBox={box}>
              <path d={d} />
            </MenuIcon>
            <MenuLabel>{label}</MenuLabel>
          </MenuItem>
        ))}
      </Menu>
    </Screen>
  );
}
